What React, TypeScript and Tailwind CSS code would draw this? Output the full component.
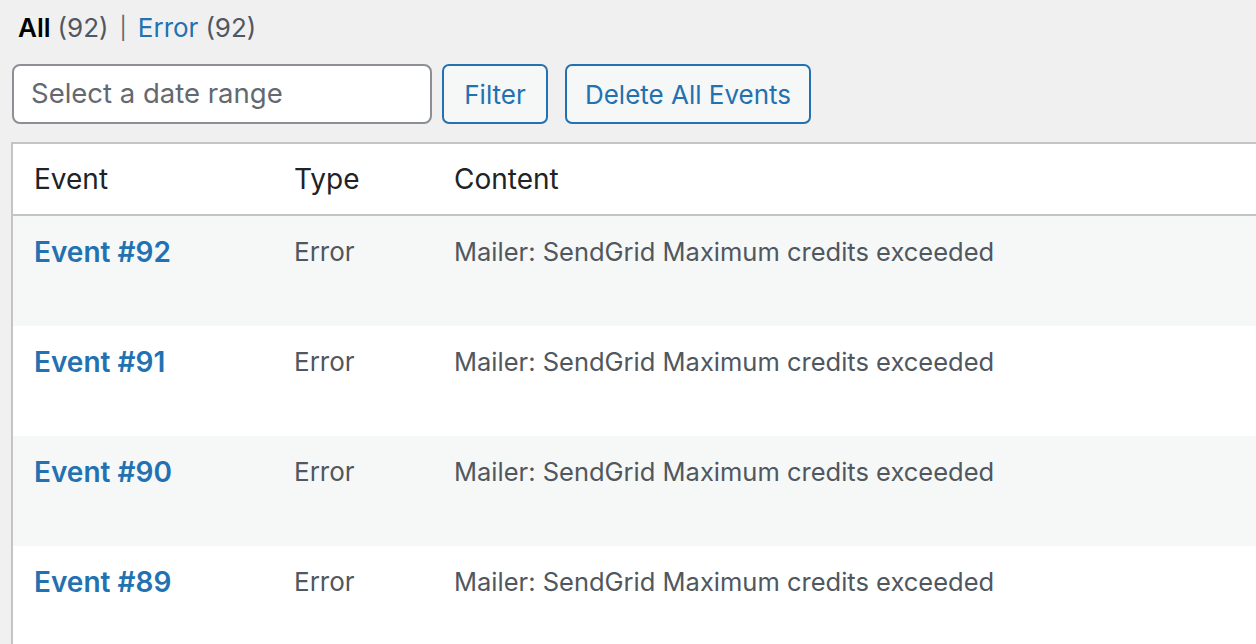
import React from "react";

const rows = [
  { id: 92, striped: true },
  { id: 91, striped: false },
  { id: 90, striped: true },
  { id: 89, striped: false },
];

export default function App() {
  return (
    <div
      className="w-[1256px] h-[644px] overflow-hidden bg-[#f0f0f1] text-[#1d2327]"
      style={{ fontFamily: "Inter, 'Noto Sans', sans-serif" }}
    >
      <div className="pl-[18px] h-[56px] flex items-center text-[26px] leading-[32px]">
        <span className="font-semibold text-black">All</span>
        <span className="ml-[7px] text-[#50575e]">(92)</span>
        <span className="mx-[11px] text-[#646970] text-[22px]">|</span>
        <span className="text-[#2271b1]">Error</span>
        <span className="ml-[7px] text-[#50575e]">(92)</span>
      </div>
      <div className="flex items-center pl-[12px] mt-[8px]">
        <div className="w-[420px] h-[60px] bg-white border-2 border-[#8c8f94] rounded-[8px] flex items-center pl-[17px] text-[27.5px] text-[#646970]">
          Select a date range
        </div>
        <button className="ml-[10px] h-[60px] w-[106px] border-2 border-[#2271b1] rounded-[7px] bg-[#f6f7f7] text-[#2271b1] text-[26px]">
          Filter
        </button>
        <button className="ml-[17px] h-[60px] w-[246px] border-2 border-[#2271b1] rounded-[7px] bg-[#f6f7f7] text-[#2271b1] text-[26px]">
          Delete All Events
        </button>
      </div>
      <div className="ml-[11px] mt-[18px] w-[1400px] bg-white border-2 border-[#c3c4c7]">
        <div className="h-[72px] flex items-center text-[28px] text-[#1d2327] border-b-2 border-[#c3c4c7]">
          <div className="w-[281px] shrink-0 pl-[21px]">Event</div>
          <div className="w-[160px] shrink-0">Type</div>
          <div>Content</div>
        </div>
        {rows.map((r) => (
          <div
            key={r.id}
            className={`h-[110px] flex items-start pt-[16px] leading-[40px] ${
              r.striped ? "bg-[#f6f7f7]" : "bg-white"
            }`}
          >
            <div className="w-[281px] shrink-0 pl-[21px] text-[28px] font-semibold text-[#2271b1]">
              Event #{r.id}
            </div>
            <div className="w-[160px] shrink-0 text-[26px] text-[#50575e]">Error</div>
            <div className="text-[25.5px] text-[#50575e]">
              Mailer: SendGrid Maximum credits exceeded
            </div>
          </div>
        ))}
      </div>
    </div>
  );
}
